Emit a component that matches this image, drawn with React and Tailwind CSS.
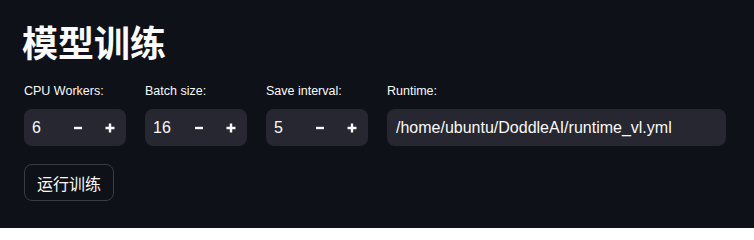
import React, { useState } from "react";

const MinusIcon = () => (
  <svg width="10" height="10" viewBox="0 0 10 10"><path d="M1 5h8" stroke="#fafafa" strokeWidth="2.4" strokeLinecap="butt" /></svg>
);
const PlusIcon = () => (
  <svg width="10" height="10" viewBox="0 0 10 10"><path d="M0.5 5h9M5 0.5v9" stroke="#fafafa" strokeWidth="2.4" strokeLinecap="butt" /></svg>
);

const NumberInput = ({ label, value, onChange }) => (
  <div className="flex flex-col w-[102px]">
    <label className="text-[12.5px] leading-[16px] h-[16px] text-[#fafafa] mb-[10px] whitespace-nowrap">{label}</label>
    <div className="flex items-center h-[37px] rounded-lg bg-[#262730]">
      <span className="flex-1 pl-2 text-[16px] text-[#fafafa]">{value}</span>
      <button onClick={() => onChange(value - 1)} className="w-[32px] h-full flex items-center justify-center"><MinusIcon /></button>
      <button onClick={() => onChange(value + 1)} className="w-[32px] h-full flex items-center justify-center"><PlusIcon /></button>
    </div>
  </div>
);

export default function App() {
  const [workers, setWorkers] = useState(6);
  const [batch, setBatch] = useState(16);
  const [interval, setInterval] = useState(5);
  const [runtime, setRuntime] = useState("/home/ubuntu/DoddleAI/runtime_vl.yml");

  return (
    <div className="w-[754px] h-[228px] bg-[#0e1117] text-[#fafafa] px-6 pt-[23px] font-['Liberation_Sans','Noto_Sans_CJK_SC',sans-serif]">
      <h1 className="text-[36px] leading-[36px] font-bold -ml-[2px] font-['Noto_Sans_CJK_SC',sans-serif]">模型训练</h1>

      {/* 参数 */}
      <div className="flex gap-[19px] mt-[24px]">
        <NumberInput label="CPU Workers:" value={workers} onChange={setWorkers} />
        <NumberInput label="Batch size:" value={batch} onChange={setBatch} />
        <NumberInput label="Save interval:" value={interval} onChange={setInterval} />
        <div className="flex flex-col w-[339px]">
          <label className="text-[12.5px] leading-[16px] h-[16px] text-[#fafafa] mb-[10px]">Runtime:</label>
          <input
            value={runtime}
            onChange={e => setRuntime(e.target.value)}
            className="h-[37px] rounded-lg bg-[#262730] px-[9px] text-[16px] text-[#fafafa] outline-none"
          />
        </div>
      </div>

      <button className="mt-[18px] h-[37px] px-3 rounded-lg border border-[#3b3d45] bg-[#0e1117] text-[16px] text-[#fafafa] font-['Noto_Sans_CJK_SC',sans-serif]">
        运行训练
      </button>
    </div>
  );
}
